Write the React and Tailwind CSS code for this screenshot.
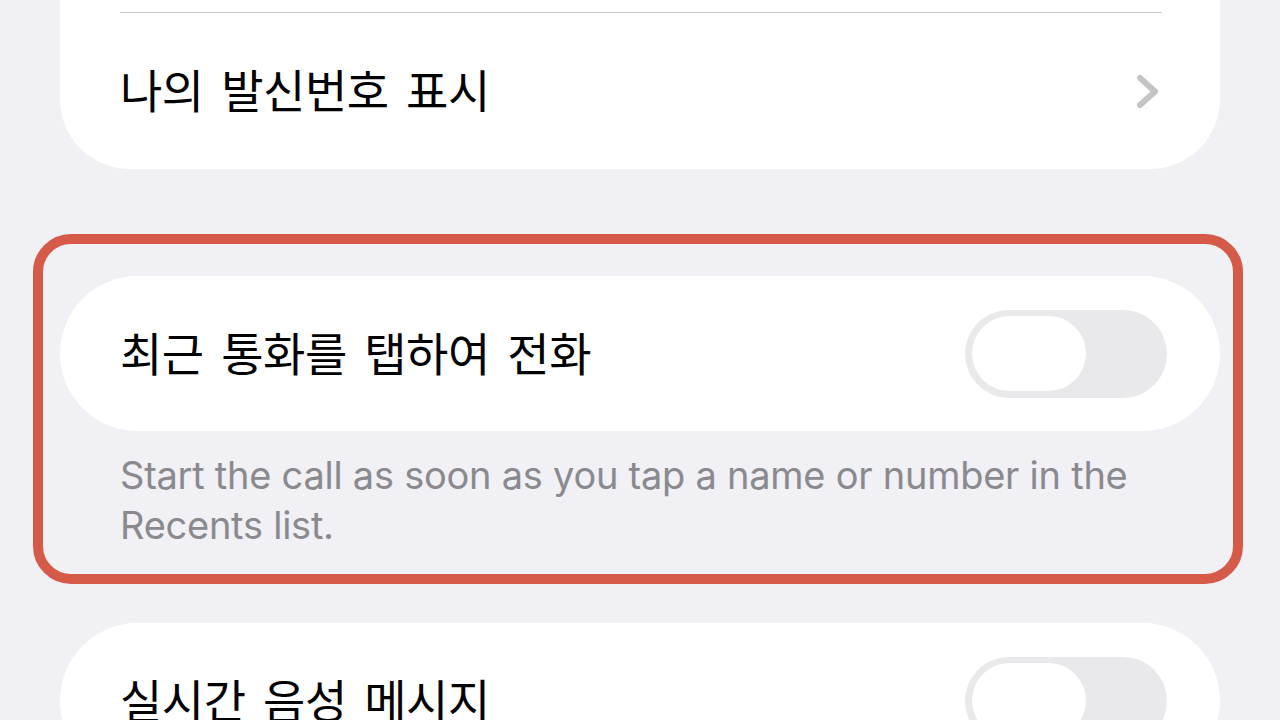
import { useState } from 'react';

const font = { fontFamily: 'Inter, "Noto Sans CJK KR", sans-serif' };

function Chevron() {
  return (
    <svg width="23" height="35" viewBox="0 0 23 35" fill="none">
      <path d="M4 4 L19 17.5 L4 31" stroke="#c4c4c7" strokeWidth="6" strokeLinecap="round" strokeLinejoin="round" />
    </svg>
  );
}

function Toggle({ on, onChange }) {
  return (
    <button
      onClick={onChange}
      className={`flex h-[88px] w-[202px] shrink-0 items-center rounded-full px-[7px] ${on ? 'justify-end bg-[#34c759]' : 'justify-start bg-[#e9e9eb]'}`}
    >
      <span className="block h-[75px] w-[114px] rounded-full bg-white" />
    </button>
  );
}

function Label({ children }) {
  return (
    <span className="text-[46px] leading-none tracking-[-0.01em] [word-spacing:5px] text-black">
      {children}
    </span>
  );
}

export default function App() {
  const [tapToCall, setTapToCall] = useState(false);
  const [liveVoicemail, setLiveVoicemail] = useState(false);

  return (
    <div style={font} className="h-[720px] w-[1280px] overflow-hidden bg-[#f0f0f5] px-[60px]">
      {/* top group, scrolled partly out of view */}
      <div className="-mt-[144px] rounded-[70px] bg-white">
        <div className="h-[156px]" />
        <div className="ml-[60px] mr-[58px] h-px bg-[#c8c8cc]" />
        <div className="flex h-[156px] items-center justify-between pl-[60px] pr-[61px]">
          <Label>나의 발신번호 표시</Label>
          <Chevron />
        </div>
      </div>

      {/* highlighted setting */}
      <div className="-ml-[27px] -mr-[23px] mt-[65px] rounded-[38px] border-[10px] border-[#d65a48] pb-[24px] pl-[17px] pr-[13px] pt-[32px]">
        <div className="flex h-[155px] items-center justify-between rounded-full bg-white pl-[60px] pr-[53px]">
          <Label>최근 통화를 탭하여 전화</Label>
          <Toggle on={tapToCall} onChange={() => setTapToCall(!tapToCall)} />
        </div>
        <p className="mt-[19px] pl-[60px] pr-[40px] text-[38px] leading-[50px] tracking-[-0.25px] text-[#8a8a8e]">
          Start the call as soon as you tap a name or number in the Recents list.
        </p>
      </div>

      <div className="mt-[39px] flex h-[155px] items-center justify-between rounded-full bg-white pl-[60px] pr-[53px]">
        <Label>실시간 음성 메시지</Label>
        <Toggle on={liveVoicemail} onChange={() => setLiveVoicemail(!liveVoicemail)} />
      </div>
    </div>
  );
}
